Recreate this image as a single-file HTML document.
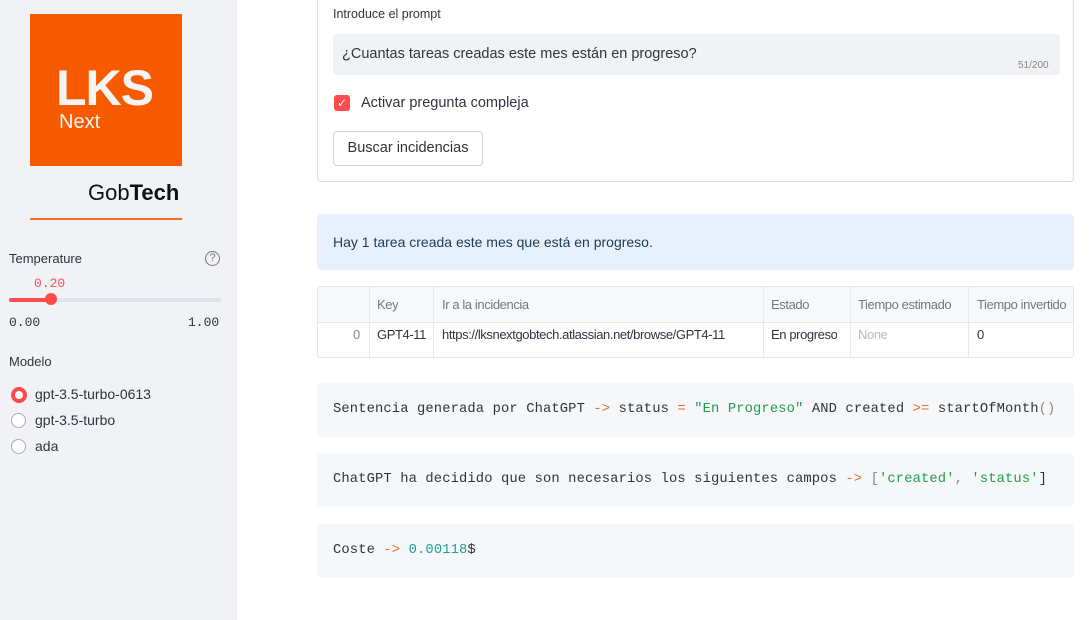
<!DOCTYPE html>
<html><head><meta charset="utf-8"><style>
body{margin:0;width:1092px;height:620px;overflow:hidden;font-family:"Liberation Sans",sans-serif;background:#fff;position:relative;color:#31333f}
.sb{position:absolute;left:0;top:0;width:237px;height:620px;background:#f0f2f6}
.abs{position:absolute}
.mono{font-family:"Liberation Mono",monospace}
.code{position:absolute;left:317px;width:757px;background:#f6f7f9;border-radius:4px;font-family:"Liberation Mono",monospace;font-size:13.8px;letter-spacing:0.12px;color:#31333f;white-space:nowrap}
.code span.o{color:#e8692a}.code span.g{color:#1e9e4a}.code span.t{color:#1f9e9a}
.th,.td{position:absolute;font-size:13px;white-space:nowrap;overflow:hidden;letter-spacing:-0.4px}
.vl{position:absolute;width:1px;background:#e6e8ec}
</style></head><body>
<div class="sb">
 <div class="abs" style="left:30px;top:14px;width:152px;height:152px;background:#f85a00"></div>
 <div class="abs" style="left:56px;top:60px;color:#f4f4f4;font-weight:bold;font-size:50px;line-height:56px;letter-spacing:-1px">LKS</div>
 <div class="abs" style="left:59px;top:110px;color:#f4f4f4;font-size:20px;line-height:24px">Next</div>
 <div class="abs" style="left:88px;top:179px;font-size:22px;color:#111;line-height:28px">Gob<b>Tech</b></div>
 <div class="abs" style="left:30px;top:218px;width:152px;height:2px;background:#f26f2b"></div>
 <div class="abs" style="left:9px;top:251px;font-size:13px">Temperature</div>
 <div class="abs" style="left:205px;top:251px;width:13px;height:13px;border:1.3px solid #777;border-radius:50%;font-size:11px;line-height:13px;text-align:center;color:#777">?</div>
 <div class="abs mono" style="left:34px;top:276px;font-size:13px;color:#ff4b4b">0.20</div>
 <div class="abs" style="left:9px;top:298px;width:212px;height:4px;background:#dfe2e8;border-radius:2px"></div>
 <div class="abs" style="left:9px;top:298px;width:42px;height:4px;background:#ff4b4b;border-radius:2px"></div>
 <div class="abs" style="left:45px;top:293px;width:12px;height:12px;background:#ff4b4b;border-radius:50%"></div>
 <div class="abs mono" style="left:9px;top:315px;font-size:13px">0.00</div>
 <div class="abs mono" style="left:188px;top:315px;font-size:13px">1.00</div>
 <div class="abs" style="left:9px;top:354px;font-size:13px">Modelo</div>
 <div class="abs" style="left:11px;top:387px;width:8px;height:8px;border:4px solid #ff4b4b;border-radius:50%;background:#fff"></div>
 <div class="abs" style="left:35px;top:386px;font-size:14px">gpt-3.5-turbo-0613</div>
 <div class="abs" style="left:11px;top:413px;width:13px;height:13px;border:1.5px solid #aaa;border-radius:50%;background:#fff"></div>
 <div class="abs" style="left:35px;top:412px;font-size:14px">gpt-3.5-turbo</div>
 <div class="abs" style="left:11px;top:439px;width:13px;height:13px;border:1.5px solid #aaa;border-radius:50%;background:#fff"></div>
 <div class="abs" style="left:35px;top:438px;font-size:14px">ada</div>
</div>

<div class="abs" style="left:317px;top:-6px;width:755px;height:186px;border:1px solid #dcdde1;border-radius:4px"></div>
<div class="abs" style="left:333px;top:7px;font-size:12.5px">Introduce el prompt</div>
<div class="abs" style="left:333px;top:34px;width:727px;height:41px;background:#f0f2f6;border-radius:4px"></div>
<div class="abs" style="left:342px;top:46px;font-size:14.5px">¿Cuantas tareas creadas este mes están en progreso?</div>
<div class="abs" style="left:1018px;top:60px;font-size:10px;color:#888">51/200</div>
<div class="abs" style="left:334px;top:95px;width:16px;height:16px;background:#ff4b4b;border-radius:3px;color:#fff;font-size:12px;line-height:16px;text-align:center">✓</div>
<div class="abs" style="left:361px;top:95px;font-size:14.5px">Activar pregunta compleja</div>
<div class="abs" style="left:333px;top:131px;width:148px;height:33px;border:1px solid #d3d4d8;border-radius:4px;font-size:14.5px;line-height:33px;text-align:center">Buscar incidencias</div>

<div class="abs" style="left:317px;top:214px;width:757px;height:56px;background:#e7f1fb;border-radius:4px"></div>
<div class="abs" style="left:333px;top:234px;font-size:14px;color:#1f3a5a">Hay 1 tarea creada este mes que está en progreso.</div>

<div class="abs" style="left:317px;top:286px;width:755px;height:70px;border:1px solid #e4e6ea;border-radius:3px;overflow:hidden">
 <div class="abs" style="left:0;top:0;width:755px;height:35px;background:#f7f8fa;border-bottom:1px solid #e4e6ea"></div>
 <div class="vl" style="left:51px;top:0;height:70px"></div>
 <div class="vl" style="left:115px;top:0;height:70px"></div>
 <div class="vl" style="left:445px;top:0;height:70px"></div>
 <div class="vl" style="left:532px;top:0;height:70px"></div>
 <div class="vl" style="left:650px;top:0;height:70px"></div>
 <div class="th" style="left:59px;top:10px;color:#777">Key</div>
 <div class="th" style="left:124px;top:10px;color:#777">Ir a la incidencia</div>
 <div class="th" style="left:453px;top:10px;color:#777">Estado</div>
 <div class="th" style="left:540px;top:10px;color:#777">Tiempo estimado</div>
 <div class="th" style="left:659px;top:10px;color:#777;width:92px">Tiempo invertido</div>
 <div class="td" style="left:35px;top:40px;color:#888">0</div>
 <div class="td" style="left:59px;top:40px">GPT4-11</div>
 <div class="td" style="left:124px;top:40px">https://lksnextgobtech.atlassian.net/browse/GPT4-11</div>
 <div class="td" style="left:453px;top:40px">En progreso</div>
 <div class="td" style="left:540px;top:40px;color:#bbb">None</div>
 <div class="td" style="left:659px;top:40px">0</div>
</div>

<div class="code" style="top:383px;height:54px;line-height:54px;padding-left:16px;box-sizing:border-box">Sentencia generada por ChatGPT <span class="o">-&gt;</span> status <span class="o">=</span> <span class="g">"En Progreso"</span> AND created <span class="o">&gt;=</span> startOfMonth<span style="color:#888">()</span></div>
<div class="code" style="top:453px;height:54px;line-height:54px;padding-left:16px;box-sizing:border-box">ChatGPT ha decidido que son necesarios los siguientes campos <span class="o">-&gt;</span> <span style="color:#888">[</span><span class="g">'created'</span><span style="color:#888">,</span> <span class="g">'status'</span>]</div>
<div class="code" style="top:524px;height:54px;line-height:54px;padding-left:16px;box-sizing:border-box">Coste <span class="o">-&gt;</span> <span class="t">0.00118</span>$</div>
</body></html>
